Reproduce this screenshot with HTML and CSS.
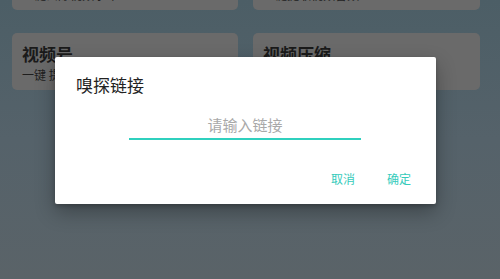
FILE: index.html
```html
<!DOCTYPE html>
<html lang="zh-CN">
<head>
<meta charset="utf-8">
<title>嗅探链接</title>
<link rel="stylesheet" href="styles.css">
</head>
<body>
<div class="page">
  <div class="grid">
    <div class="card">
      <div class="card-title">去水印</div>
      <div class="card-sub">一键去除视频水印</div>
    </div>
    <div class="card">
      <div class="card-title">提取音频</div>
      <div class="card-sub">一键提取视频音频</div>
    </div>
    <div class="card">
      <div class="card-title">视频号</div>
      <div class="card-sub">一键 提取视频号视频</div>
    </div>
    <div class="card">
      <div class="card-title">视频压缩</div>
      <div class="card-sub">一键压缩视频大小</div>
    </div>
  </div>

  <div class="dialog">
    <div class="dialog-title">嗅探链接</div>
    <input class="dialog-input" type="text" placeholder="请输入链接">
    <div class="dialog-actions">
      <span class="btn">取消</span>
      <span class="btn">确定</span>
    </div>
  </div>
</div>
</body>
</html>
```

FILE: styles.css
```css
html, body {
  margin: 0;
  padding: 0;
}
body {
  font-family: "Noto Sans CJK SC", "Noto Sans", sans-serif;
}
.page {
  position: relative;
  width: 500px;
  height: 279px;
  overflow: hidden;
  background: linear-gradient(180deg, #4c5e66 0%, #55626a 50%, #5a6368 100%);
}
.grid {
  display: grid;
  grid-template-columns: 226px 227px;
  column-gap: 15px;
  row-gap: 23px;
  padding: 0 20px 0 12px;
  margin-top: -47px;
}
.card {
  height: 57px;
  box-sizing: border-box;
  background: #6a6a6a;
  border-radius: 5px;
  padding: 11px 10px 0 10px;
}
.card-title {
  font-size: 17px;
  line-height: 20px;
  font-weight: 600;
  color: #1a1a1a;
}
.card-sub {
  margin-top: 4px;
  font-size: 12px;
  line-height: 14px;
  color: #1e1e1e;
}
.dialog {
  position: absolute;
  left: 55px;
  top: 57px;
  width: 381px;
  height: 147px;
  box-sizing: border-box;
  background: #ffffff;
  border-radius: 2px;
  box-shadow: 0 8px 20px rgba(0, 0, 0, 0.3), 0 2px 4px rgba(0, 0, 0, 0.2);
  padding: 17px 25px 17px 21px;
  display: flex;
  flex-direction: column;
}
.dialog-title {
  font-size: 17px;
  line-height: 22px;
  color: #222222;
}
.dialog-input {
  display: block;
  align-self: center;
  margin: 18px 0 0 3px;
  width: 232px;
  height: 26px;
  box-sizing: border-box;
  border: none;
  border-bottom: 2px solid #2fd0be;
  padding: 0 0 4px 0;
  font-family: "Noto Sans CJK SC", "Noto Sans", sans-serif;
  font-size: 15px;
  line-height: 20px;
  text-align: center;
  outline: none;
  background: transparent;
}
.dialog-input::placeholder {
  color: #a9a9a9;
}
.dialog-actions {
  margin-top: 31px;
  display: flex;
  justify-content: flex-end;
  gap: 32px;
}
.btn {
  font-size: 12px;
  line-height: 16px;
  color: #35cbbb;
}
```
